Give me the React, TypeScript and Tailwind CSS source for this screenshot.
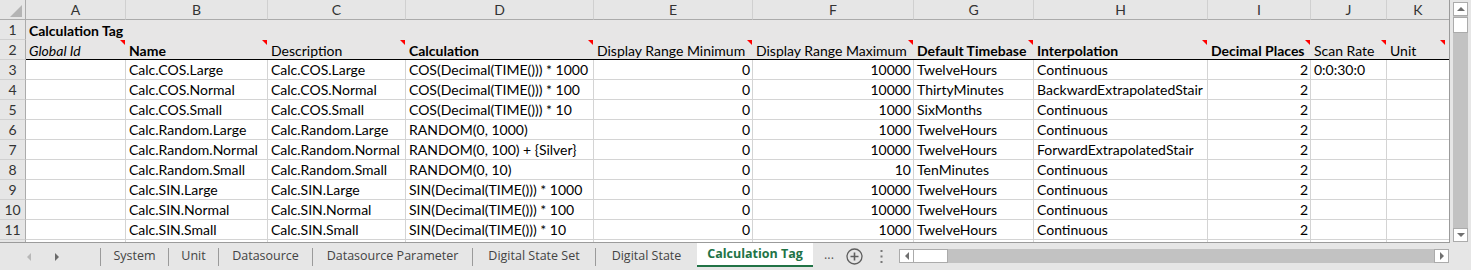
import React from "react";

const CELL_FONT = "font-['Lato',sans-serif] text-[14px]";
const UI_FONT = "font-['Open_Sans',sans-serif] text-[12.5px]";

const letters = ["A", "B", "C", "D", "E", "F", "G", "H", "I", "J", "K"];

const headers: { text: string; cls: string }[] = [
  { text: "Global Id", cls: "italic" },
  { text: "Name", cls: "font-bold" },
  { text: "Description", cls: "" },
  { text: "Calculation", cls: "font-bold" },
  { text: "Display Range Minimum", cls: "" },
  { text: "Display Range Maximum", cls: "" },
  { text: "Default Timebase", cls: "font-bold" },
  { text: "Interpolation", cls: "font-bold" },
  { text: "Decimal Places", cls: "font-bold" },
  { text: "Scan Rate", cls: "" },
  { text: "Unit", cls: "" },
];

const rows: string[][] = [
  ["", "Calc.COS.Large", "Calc.COS.Large", "COS(Decimal(TIME())) * 1000", "0", "10000", "TwelveHours", "Continuous", "2", "0:0:30:0", ""],
  ["", "Calc.COS.Normal", "Calc.COS.Normal", "COS(Decimal(TIME())) * 100", "0", "10000", "ThirtyMinutes", "BackwardExtrapolatedStair", "2", "", ""],
  ["", "Calc.COS.Small", "Calc.COS.Small", "COS(Decimal(TIME())) * 10", "0", "1000", "SixMonths", "Continuous", "2", "", ""],
  ["", "Calc.Random.Large", "Calc.Random.Large", "RANDOM(0, 1000)", "0", "1000", "TwelveHours", "Continuous", "2", "", ""],
  ["", "Calc.Random.Normal", "Calc.Random.Normal", "RANDOM(0, 100) + {Silver}", "0", "10000", "TwelveHours", "ForwardExtrapolatedStair", "2", "", ""],
  ["", "Calc.Random.Small", "Calc.Random.Small", "RANDOM(0, 10)", "0", "10", "TenMinutes", "Continuous", "2", "", ""],
  ["", "Calc.SIN.Large", "Calc.SIN.Large", "SIN(Decimal(TIME())) * 1000", "0", "10000", "TwelveHours", "Continuous", "2", "", ""],
  ["", "Calc.SIN.Normal", "Calc.SIN.Normal", "SIN(Decimal(TIME())) * 100", "0", "10000", "TwelveHours", "Continuous", "2", "", ""],
  ["", "Calc.SIN.Small", "Calc.SIN.Small", "SIN(Decimal(TIME())) * 10", "0", "1000", "TwelveHours", "Continuous", "2", "", ""],
];

const rightCols = [4, 5, 8];

const tabs: { name: string; w: string }[] = [
  { name: "System", w: "w-[67px]" },
  { name: "Unit", w: "w-[49px]" },
  { name: "Datasource", w: "w-[93px]" },
  { name: "Datasource Parameter", w: "w-[159px]" },
  { name: "Digital State Set", w: "w-[122px]" },
  { name: "Digital State", w: "w-[101px]" },
];

function CommentMark({ last }: { last?: boolean }) {
  return (
    <svg
      className={`absolute top-0 ${last ? "right-[4px]" : "right-[1px]"}`}
      width="5"
      height="5"
      viewBox="0 0 5 5"
    >
      <polygon points="0,0 5,0 5,5" fill="#ff0000" />
    </svg>
  );
}

function RowNum({ n, last }: { n: string; last?: boolean }) {
  return (
    <div
      className={`flex items-center justify-center border-r border-[#ababab] bg-[#e6e6e6] pt-[1px] text-[#333] ${
        last ? "h-[2px]" : "h-[20px] border-b border-b-[#d0d0d0]"
      }`}
    >
      {n}
    </div>
  );
}

function Arrow({ dir, color }: { dir: "up" | "down" | "left" | "right"; color: string }) {
  const pts = {
    up: "0,4 4,0 8,4",
    down: "0,0 8,0 4,4",
    left: "4,0 4,8 0,4",
    right: "0,0 0,8 4,4",
  }[dir];
  const vertical = dir === "up" || dir === "down";
  return (
    <svg width={vertical ? 8 : 4} height={vertical ? 4 : 8} viewBox={vertical ? "0 0 8 4" : "0 0 4 8"}>
      <polygon points={pts} fill={color} />
    </svg>
  );
}

export default function App() {
  return (
    <div className="flex h-[270px] w-[1471px] flex-col overflow-hidden bg-[#e6e6e6]">
      <div className="flex h-[243px]">
        {/* sheet grid */}
        <div
          className={`grid h-[243px] w-[1450px] grid-cols-[26px_100px_142px_138px_188px_159px_161px_120px_174px_103px_76px_62px] content-start overflow-hidden border-r border-b border-[#9b9b9b] bg-white ${CELL_FONT} leading-none`}
        >
          {/* column letters */}
          <div className="relative h-[20px] border-r border-b border-[#ababab] bg-[#e6e6e6]">
            <svg className="absolute left-[10px] top-[5px]" width="12" height="12" viewBox="0 0 12 12">
              <polygon points="12,0 12,12 0,12" fill="#b4b4b4" />
            </svg>
          </div>
          {letters.map((l, i) => (
            <div
              key={l}
              className={`flex h-[20px] items-center justify-center border-b border-b-[#ababab] bg-[#e6e6e6] pt-[1px] text-[#333] ${
                i < 10 ? "border-r border-r-[#d0d0d0]" : ""
              }`}
            >
              {l}
            </div>
          ))}

          {/* row 1 */}
          <RowNum n="1" />
          <div className="col-span-11 flex h-[20px] items-center whitespace-nowrap bg-[#e7e6e6] pl-[3px] pt-[1px] font-bold text-black">
            Calculation Tag
          </div>

          {/* row 2 */}
          <RowNum n="2" />
          {headers.map((h, i) => (
            <div
              key={h.text}
              className={`relative flex h-[20px] items-center whitespace-nowrap border-b border-black bg-[#e7e6e6] pl-[3px] pt-[2px] text-black ${h.cls}`}
            >
              {h.text}
              <CommentMark last={i === 10} />
            </div>
          ))}

          {/* data rows */}
          {rows.map((r, ri) => (
            <React.Fragment key={ri}>
              <RowNum n={String(ri + 3)} />
              {r.map((c, ci) => (
                <div
                  key={ci}
                  className={`flex h-[20px] items-center whitespace-nowrap border-b border-[#d4d4d4] px-[3px] pt-[1px] text-black ${
                    ci < 10 ? "border-r" : ""
                  } ${rightCols.includes(ci) ? "justify-end pr-[2px]" : ""}`}
                >
                  {c}
                </div>
              ))}
            </React.Fragment>
          ))}

          {/* row 12, cut off */}
          <RowNum n="" last />
          {letters.map((l, i) => (
            <div key={l} className={`h-[2px] ${i < 10 ? "border-r border-[#d4d4d4]" : ""}`} />
          ))}
        </div>

        {/* vertical scrollbar */}
        <div className="ml-[3px] mt-[2px] flex h-[240px] w-[15px] flex-col bg-[#c2c2c2]">
          <div className="flex h-[14px] items-center justify-center border border-[#ababab] bg-white">
            <Arrow dir="up" color="#707070" />
          </div>
          <div className="mt-[1px] h-[16px] border border-[#ababab] bg-white" />
          <div className="flex-1" />
          <div className="flex h-[14px] items-center justify-center border border-[#ababab] bg-white">
            <Arrow dir="down" color="#707070" />
          </div>
        </div>
      </div>

      {/* sheet tabs */}
      <div className={`flex h-[27px] items-stretch ${UI_FONT} text-[#444]`}>
        <div className="flex w-[100px] items-center">
          <div className="ml-[27px]">
            <Arrow dir="left" color="#b8b8b8" />
          </div>
          <div className="ml-[24px]">
            <Arrow dir="right" color="#6a6a6a" />
          </div>
        </div>
        {tabs.map((t) => (
          <div key={t.name} className="flex items-center">
            <div className="h-[18px] w-px bg-[#9a9a9a]" />
            <div className={`flex items-center justify-center ${t.w}`}>{t.name}</div>
          </div>
        ))}
        <div className="flex h-[24px] w-[116px] items-center justify-center border-b-2 border-[#217346] bg-white font-bold text-[#217346]">
          Calculation Tag
        </div>
        <div className="flex w-[32px] items-center justify-center pb-[3px] text-[#555]">...</div>
        <div className="flex w-[18px] items-center justify-center">
          <svg width="17" height="17" viewBox="0 0 17 17">
            <circle cx="8.5" cy="8.5" r="7.5" fill="none" stroke="#5f5f5f" strokeWidth="1.3" />
            <path d="M8.5 4.5v8M4.5 8.5h8" stroke="#5f5f5f" strokeWidth="1.6" />
          </svg>
        </div>
        <div className="flex w-[36px] items-center justify-center">
          <svg width="3" height="13" viewBox="0 0 3 13">
            <rect x="0.5" y="0" width="2" height="2" fill="#777" />
            <rect x="0.5" y="5.5" width="2" height="2" fill="#777" />
            <rect x="0.5" y="11" width="2" height="2" fill="#777" />
          </svg>
        </div>
        {/* horizontal scrollbar */}
        <div className="mt-[6px] flex h-[14px] w-[550px] bg-[#c2c2c2]">
          <div className="flex w-[15px] items-center justify-center border border-[#ababab] bg-white">
            <Arrow dir="left" color="#707070" />
          </div>
          <div className="w-[34px] border-y border-r border-[#ababab] bg-white" />
          <div className="flex-1" />
          <div className="flex w-[15px] items-center justify-center border border-[#ababab] bg-white">
            <Arrow dir="right" color="#707070" />
          </div>
        </div>
      </div>
    </div>
  );
}
